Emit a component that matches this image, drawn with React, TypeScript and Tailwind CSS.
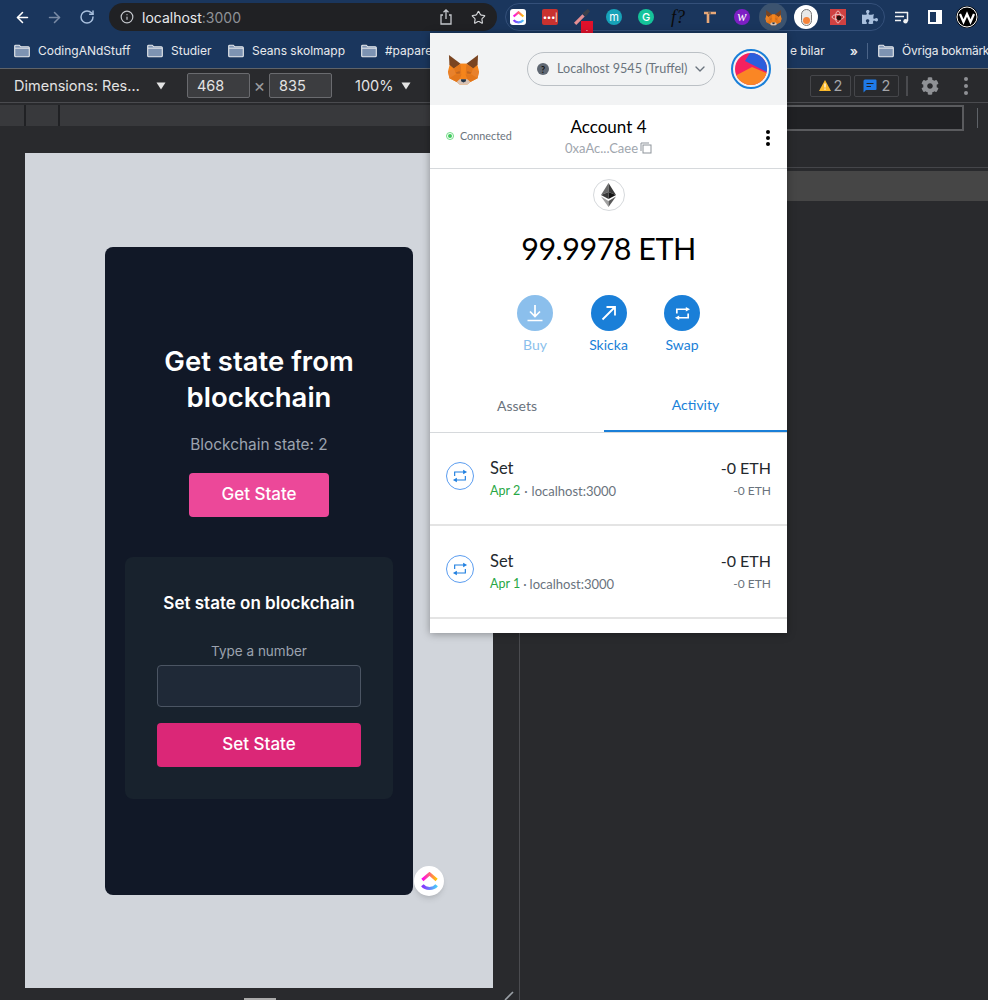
import React from "react";
import { ArrowLeft, ArrowRight, RotateCw, Info, Star, ChevronDown } from "lucide-react";
import { FaCog, FaPuzzlePiece } from "react-icons/fa";

const sans = "font-['Inter',sans-serif]";
const mm = "font-['Lato',sans-serif]";

function Folder() {
  return (
    <svg width="16" height="14" viewBox="0 0 16 14" className="shrink-0">
      <path d="M0.7 2.2a1 1 0 0 1 1-1h3.6l1.5 1.6h7.5a1 1 0 0 1 1 1v8a1 1 0 0 1-1 1H1.7a1 1 0 0 1-1-1z" fill="#7d93b2" stroke="#e8eaed" strokeWidth="1.1" />
      <path d="M1 4.2h14" stroke="#e8eaed" strokeWidth="1" />
    </svg>
  );
}

function Fox({ size = 34 }: { size?: number }) {
  return (
    <svg width={size} height={size} viewBox="0 0 34 32">
      <polygon points="3,10 7,14 14,10 20,10 27,14 31,10 33,18 31.5,25 24,29 21,31.5 13,31.5 10,29 2.5,25 1,18" fill="#f6851b" />
      <polygon points="2,1 14,10 7,15 2.5,11" fill="#7a4420" />
      <polygon points="32,1 20,10 27,15 31.5,11" fill="#7a4420" />
      <polygon points="7,15 14,10 15,20 9,21" fill="#e2761b" />
      <polygon points="27,15 20,10 19,20 25,21" fill="#e2761b" />
      <polygon points="14,10 20,10 19,21 17,23 15,21" fill="#f6851b" />
      <polygon points="1,18 7,15 9,21 2.5,25" fill="#e8812c" />
      <polygon points="33,18 27,15 25,21 31.5,25" fill="#e8812c" />
      <polygon points="9,21 15,21 13,26 10,29 2.5,25" fill="#e2761b" />
      <polygon points="25,21 19,21 21,26 24,29 31.5,25" fill="#e2761b" />
      <polygon points="9,19 13,17.5 13.5,20 10,20.5" fill="#c0651f" />
      <polygon points="25,19 21,17.5 20.5,20 24,20.5" fill="#c0651f" />
      <polygon points="13,26 21,26 24,29 21,31.5 13,31.5 10,29" fill="#d7c1b3" />
      <polygon points="14.5,26 19.5,26 19.5,28 17,29.5 14.5,28" fill="#233447" />
    </svg>
  );
}

function ClickUp({ size = 20, id }: { size?: number; id: string }) {
  return (
    <svg width={size} height={size} viewBox="0 0 20 20">
      <defs>
        <linearGradient id={`${id}Top`} x1="0" y1="0" x2="1" y2="0">
          <stop offset="0" stopColor="#ff02f0" />
          <stop offset="1" stopColor="#ffc800" />
        </linearGradient>
        <linearGradient id={`${id}Bot`} x1="0" y1="0" x2="1" y2="0">
          <stop offset="0" stopColor="#8930fd" />
          <stop offset="1" stopColor="#49ccf9" />
        </linearGradient>
      </defs>
      <polyline points="2.5,8.5 10,2 17.5,8.5" fill="none" stroke={`url(#${id}Top)`} strokeWidth="3.4" />
      <path d="M2.5 14 C 6 18.5, 14 18.5, 17.5 14" fill="none" stroke={`url(#${id}Bot)`} strokeWidth="3.4" />
    </svg>
  );
}

function SwapIcon({ size = 16, color = "white", sw = 1.8 }: { size?: number; color?: string; sw?: number }) {
  return (
    <svg width={size} height={size} viewBox="0 0 18 18" fill="none">
      <path d="M3 9V4.5H13" stroke={color} strokeWidth={sw} />
      <polygon points="12.5,2 17,4.5 12.5,7" fill={color} />
      <path d="M15 9V13.5H5" stroke={color} strokeWidth={sw} />
      <polygon points="5.5,11 1,13.5 5.5,16" fill={color} />
    </svg>
  );
}

function Tri({ className = "" }: { className?: string }) {
  return (
    <svg width="10" height="8" viewBox="0 0 10 8" className={className}>
      <polygon points="0.5,0.5 9.5,0.5 5,7.5" fill="#e3e3e3" />
    </svg>
  );
}

function Ext({ children }: { children: React.ReactNode }) {
  return <div className="relative flex h-7 w-8 shrink-0 items-center justify-center">{children}</div>;
}

function Tx({ date, gap }: { date: string; gap: string }) {
  return (
    <div className="flex h-[93px] shrink-0 items-start border-b-2 border-[#e4e4e4] px-4 pt-[25px]">
      <div className="mt-[4px] flex h-7 w-7 shrink-0 items-center justify-center rounded-full border border-[#5b9df0]">
        <SwapIcon size={16} color="#1f7fe0" sw={1.3} />
      </div>
      <div className="ml-4 flex-1">
        <div className="text-[16.5px] leading-5 text-[#24292e]">Set</div>
        <div className="mt-[5px] flex text-[13px] leading-4 text-[#6a737d]">
          <span className="text-[12.5px] text-[#28a745]">{date}</span>
          <span className={gap}>·</span>
          <span>localhost:3000</span>
        </div>
      </div>
      <div className="text-right">
        <div className="text-[16px] leading-5 text-[#24292e]">-0 ETH</div>
        <div className="mt-[5px] text-[12px] leading-4 text-[#6a737d]">-0 ETH</div>
      </div>
    </div>
  );
}

function Action({ label, light, children }: { label: string; light?: boolean; children: React.ReactNode }) {
  return (
    <div className="flex w-[73.5px] flex-col items-center">
      <div className={`flex h-9 w-9 items-center justify-center rounded-full ${light ? "bg-[#8bbfec]" : "bg-[#1a7fd8]"}`}>{children}</div>
      <div className={`mt-[4px] text-[14px] leading-5 ${light ? "text-[#8bbfec]" : "text-[#1a7fd8]"}`}>{label}</div>
    </div>
  );
}

export default function App() {
  return (
    <div className={`relative flex h-[1000px] w-[988px] flex-col overflow-hidden bg-[#292a2d] ${sans}`}>
      {/* Browser toolbar */}
      <div className="flex h-[34px] shrink-0 items-center bg-[#1a365d] pl-[14px]">
        <ArrowLeft size={17} strokeWidth={2.2} className="text-white" />
        <ArrowRight size={17} strokeWidth={2.2} className="ml-[15px] text-[#7a8ba5]" />
        <RotateCw size={16} strokeWidth={2.2} className="ml-[16px] text-[#a9c0de]" />
        <div className="ml-[14px] flex h-[28px] w-[388px] shrink-0 items-center rounded-full bg-[#202124] pl-[11px]">
          <Info size={14} className="text-[#c4c7cc]" />
          <span className="ml-[8px] text-[14px] text-[#e8eaed]">localhost<span className="text-[#8f9297]">:3000</span></span>
          <svg width="14" height="16" viewBox="0 0 14 16" fill="none" className="ml-auto text-[#c4c7cc]">
            <path d="M4 6H2v9h10V6h-2M7 10V1M4.5 3.2 7 .9l2.5 2.3" stroke="currentColor" strokeWidth="1.3" />
          </svg>
          <Star size={15} strokeWidth={1.8} className="ml-[18px] mr-[11px] text-[#d5d7da]" />
        </div>
        <div className="ml-[8px] flex h-[28px] w-[380px] shrink-0 items-center rounded-full border border-[#34507a]">
          <div className="-ml-[4px] flex">
            <Ext>
              <div className="flex h-4 w-4 items-center justify-center rounded-[3px] bg-white"><ClickUp size={13} id="cuA" /></div>
            </Ext>
            <Ext><div className="flex h-4 w-4 items-center justify-center rounded-[2px] bg-[#c8322f] text-[8px] leading-none tracking-tighter text-white">•••|</div></Ext>
            <Ext>
              <svg width="18" height="18" viewBox="0 0 17 17"><path d="M2 15 10 7" stroke="#e58f93" strokeWidth="3" /><path d="M9 5 14 1l2 2-4 5z" fill="#3b4049" /></svg>
              <div className="absolute bottom-[-2px] left-[15px] flex h-3 w-3 items-end justify-center bg-[#e0112b] text-[7px] leading-[9px] text-white">.</div>
            </Ext>
            <Ext><div className="flex h-4 w-4 items-center justify-center rounded-full bg-[#17a2b8] text-[11px] leading-none text-white">m</div></Ext>
            <Ext><div className="flex h-4 w-4 items-center justify-center rounded-full bg-[#15c39a] text-[11px] font-medium leading-none text-white">G</div></Ext>
            <Ext><span className="font-['Liberation_Serif',serif] text-[18px] italic leading-none text-[#0a0a0a]">f?</span></Ext>
            <Ext>
              <svg width="14" height="14" viewBox="0 0 14 14"><path d="M1 3h12M5 3v10" stroke="#e8a878" strokeWidth="2.6" fill="none" /><path d="M5 3h3" stroke="#333" strokeWidth="1" /></svg>
            </Ext>
            <Ext><div className="flex h-4 w-4 items-center justify-center rounded-full bg-[#7d1fc4] font-['Liberation_Serif',serif] text-[14px] italic leading-none text-white">w</div></Ext>
            <Ext>
              <div className="absolute left-[1px] top-0 h-7 w-7 rounded-full bg-[#3c536f]" />
              <div className="relative -ml-[1px]"><Fox size={17} /></div>
            </Ext>
            <Ext>
              <div className="flex h-6 w-6 items-center justify-center rounded-full bg-white">
                <div className="flex h-[17px] w-[11px] items-end justify-center rounded-full border border-[#777] bg-[#e8e8e8] pb-[1px]">
                  <div className="h-[7px] w-[7px] rounded-full bg-[#f5843b]" />
                </div>
              </div>
            </Ext>
            <Ext>
              <div className="flex h-4 w-4 items-center justify-center bg-[#cf4141]">
                <svg width="14" height="14" viewBox="0 0 14 14" fill="none"><ellipse cx="7" cy="7" rx="6" ry="2.5" stroke="#f4d6d6" strokeWidth=".8" /><ellipse cx="7" cy="7" rx="2.5" ry="6" stroke="#f4d6d6" strokeWidth=".8" /><circle cx="8" cy="8" r="2.4" fill="#26120f" /></svg>
              </div>
            </Ext>
            <Ext><FaPuzzlePiece size={16} className="text-[#a8bfdd]" /></Ext>
          </div>
        </div>
        <div className="ml-[2px] flex">
          <Ext>
            <svg width="16" height="13" viewBox="0 0 16 13" fill="none"><path d="M0 1.5h13M0 5.5h9M0 9.5h6" stroke="#f1f3f4" strokeWidth="1.5" /><path d="M12.5 1v9" stroke="#f1f3f4" strokeWidth="1.5" /><circle cx="10.5" cy="10.2" r="2.2" fill="#f1f3f4" /></svg>
          </Ext>
          <Ext><div className="h-[14px] w-[14px] border-2 border-r-[6px] border-white" /></Ext>
          <Ext>
            <div className="flex h-[22px] w-[22px] items-center justify-center rounded-full bg-black">
              <svg width="22" height="22" viewBox="0 0 22 22" fill="none"><circle cx="11" cy="11" r="10" stroke="white" strokeWidth="1" /><path d="M4 8l3.5 8L11 8l3.5 8L18 8" stroke="white" strokeWidth="2.2" /></svg>
            </div>
          </Ext>
        </div>
      </div>

      {/* Bookmarks */}
      <div className="flex h-[35px] shrink-0 items-center border-b border-[#5f6368] bg-[#1a365d] pl-[14px] text-[12px] text-[#e8eaed]">
        <Folder /><span className="ml-2 w-[93px] whitespace-nowrap">CodingANdStuff</span>
        <span className="ml-[16px]"><Folder /></span><span className="ml-2 w-[41px]">Studier</span>
        <span className="ml-[16px]"><Folder /></span><span className="ml-2 w-[93px] whitespace-nowrap">Seans skolmapp</span>
        <span className="ml-[16px]"><Folder /></span><span className="ml-2 w-[60px] whitespace-nowrap">#papare</span>
        <span className="ml-auto whitespace-nowrap">e bilar</span>
        <span className="ml-[25px] text-[13px] font-semibold leading-none">»</span>
        <div className="ml-[9px] h-[16px] w-px bg-[#4b6488]" />
        <span className="ml-[10px]"><Folder /></span>
        <span className="ml-2 w-[86px] whitespace-nowrap tracking-[-0.25px]">Övriga bokmärk</span>
      </div>

      {/* Device toolbar */}
      <div className="flex h-[34px] shrink-0 items-center border-b border-[#4a4b4f] bg-[#292a2d] pl-[14px] text-[14.5px] text-[#e3e3e3]">
        <span className="w-[127px] whitespace-nowrap">Dimensions: Res…</span>
        <Tri className="ml-[15px]" />
        <div className="ml-[21px] flex h-[25px] w-[63px] items-center rounded-[2px] border border-[#6a6b6f] bg-[#3c3d40] pl-[9px]">468</div>
        <span className="w-[19px] text-center text-[18px] leading-none text-[#9a9b9f]">×</span>
        <div className="flex h-[25px] w-[63px] items-center rounded-[2px] border border-[#6a6b6f] bg-[#3c3d40] pl-[9px]">835</div>
        <span className="ml-[23px] w-[39px]">100%</span>
        <Tri className="ml-[7px]" />
        <div className="ml-auto flex h-[22px] w-[41px] items-center justify-center gap-[3px] rounded-[2px] border border-[#45464a] text-[#a4a6aa]">
          <svg width="12" height="11" viewBox="0 0 12 11"><polygon points="6,0 12,11 0,11" fill="#f9b82b" /><path d="M6 3.5V7.5M6 8.5V9.8" stroke="#fff" strokeWidth="1.2" /></svg>
          <span>2</span>
        </div>
        <div className="ml-[3px] flex h-[22px] w-[45px] items-center justify-center gap-[5px] rounded-[2px] border border-[#45464a] text-[#a4a6aa]">
          <svg width="14" height="14" viewBox="0 0 14 14"><path d="M2 0.5h10.5a1 1 0 0 1 1 1V10a1 1 0 0 1-1 1H3L.5 13.5V2a1.5 1.5 0 0 1 1.5-1.5z" fill="#1f7ae8" /><path d="M3.5 4.5h7M3.5 7.5h4.5" stroke="#202124" strokeWidth="1.2" /></svg>
          <span>2</span>
        </div>
        <div className="ml-[7px] h-[20px] w-[2px] bg-[#4a4b4f]" />
        <FaCog size={18} className="ml-[13px] text-[#8f9195]" />
        <div className="ml-[25px] mr-[20px] flex w-[4px] flex-col gap-[3px]">
          <div className="h-[4px] w-[4px] rounded-full bg-[#8f9195]" />
          <div className="h-[4px] w-[4px] rounded-full bg-[#8f9195]" />
          <div className="h-[4px] w-[4px] rounded-full bg-[#8f9195]" />
        </div>
      </div>

      {/* Main */}
      <div className="flex min-h-0 flex-1">
        <div className="flex w-[519px] shrink-0 flex-col">
          <div className="mt-[2px] flex h-[21px] w-full shrink-0 gap-[24px] bg-[#38393c] pl-[2px]">
            <div className="ml-[22px] h-full w-[2px] bg-[#202124]" />
            <div className="ml-[8px] h-full w-[2px] bg-[#202124]" />
          </div>
          <div className="ml-[25px] mt-[27px] flex h-[835px] w-[468px] shrink-0 items-center justify-center bg-[#d1d5db]">
            <div className="flex h-[648px] w-[308px] flex-col items-center rounded-lg bg-[#111827] pt-[96px]">
              <h1 className="w-[240px] text-center text-[27.5px] font-semibold leading-9 text-white">Get state from blockchain</h1>
              <p className="mt-[18px] text-[15.4px] leading-6 text-[#9ca3af]">Blockchain state: 2</p>
              <button className="mt-[16px] h-11 w-[140px] rounded bg-[#ec4899] pt-[1px] text-[17px] font-medium text-white">Get State</button>
              <div className="mt-[40px] flex h-[242px] w-[268px] flex-col items-center rounded-lg bg-[#18222d] px-8 pt-[34px]">
                <h2 className="text-[17px] font-semibold leading-6 text-white">Set state on blockchain</h2>
                <label className="mt-[26px] text-[13.5px] leading-5 text-[#9ca3af]">Type a number</label>
                <input className="mt-[4px] h-[42px] w-full rounded border border-[#4b5563] bg-[#1f2937]" />
                <button className="mt-4 h-11 w-full rounded bg-[#db2777] pt-[1px] text-[17px] font-medium text-white">Set State</button>
              </div>
            </div>
          </div>
          <div className="ml-[244px] mt-[10px] h-[2px] w-8 bg-[#aaaaaa]" />
        </div>
        <div className="w-px shrink-0 bg-[#4a4b4f]" />
        <div className="flex min-w-0 flex-1 flex-col">
          <div className="flex h-[65px] shrink-0 items-start border-b border-[#45464a] pt-[2px]">
            <div className="h-[26px] flex-1 border-2 border-[#5a5b5e] bg-[#202124]" />
            <div className="ml-[13px] mr-[10px] mt-[3px] h-[20px] w-px bg-[#5f6368]" />
          </div>
          <div className="mt-[3px] h-[30px] shrink-0 bg-[#464646]" />
        </div>
      </div>

      {/* Resize corner */}
      <svg width="12" height="10" viewBox="0 0 12 10" className="absolute bottom-0 left-[503px]">
        <path d="M2 10 10 2" stroke="#9aa0a6" strokeWidth="1.6" />
      </svg>

      {/* ClickUp bubble */}
      <div className="absolute left-[414px] top-[866px] flex h-[30px] w-[30px] items-center justify-center rounded-full bg-white shadow-md">
        <ClickUp size={19} id="cuB" />
      </div>

      {/* MetaMask popup */}
      <div className={`absolute left-[430px] top-[33px] flex h-[600px] w-[357px] flex-col overflow-hidden bg-white shadow-[0_1px_8px_rgba(0,0,0,0.35)] ${mm}`}>
        <div className="flex h-[72px] shrink-0 items-center bg-[#f2f3f4] pl-[17px]">
          <Fox size={33} />
          <div className="ml-[47px] flex h-[34px] w-[188px] items-center rounded-full border border-[#bbc0c5] pl-[9px] text-[12.6px] text-[#6a737d]">
            <div className="flex h-3 w-3 items-center justify-center rounded-full bg-[#5f6772] text-[9px] font-bold leading-none text-[#111]">?</div>
            <span className="ml-[8px] whitespace-nowrap">Localhost 9545 (Truffel)</span>
            <ChevronDown size={16} className="ml-auto mr-[6px] text-[#6a737d]" />
          </div>
          <div className="ml-[16px] flex h-10 w-10 items-center justify-center rounded-full border-2 border-[#1a7fd8]">
            <svg width="32" height="32" viewBox="0 0 32 32" className="rounded-full">
              <rect width="32" height="32" fill="#f5215f" />
              <polygon points="15,0 34,0 34,20 10,8" fill="#2b5fdc" />
              <polygon points="-2,24 17,14 36,22 36,34 -2,34" fill="#fa8624" />
            </svg>
          </div>
        </div>

        <div className="relative flex h-[64px] shrink-0 flex-col items-center border-b border-[#d6d9dc] pt-[12px]">
          <div className="text-[17px] leading-5 text-black">Account 4</div>
          <div className="mt-[3px] flex items-center text-[13px] leading-4 text-[#9fa6ae]">
            0xaAc...Caee
            <svg width="12" height="12" viewBox="0 0 12 12" fill="none" className="ml-[2px]"><path d="M1 9V1h8" stroke="#8d939a" /><rect x="3" y="3" width="8" height="8" stroke="#8d939a" /></svg>
          </div>
          <div className="absolute left-[16px] top-[25px] flex items-center text-[10.8px] leading-3 text-[#6a737d]">
            <div className="flex h-2 w-2 items-center justify-center rounded-full border border-[#70dd85]"><div className="h-1 w-1 rounded-full bg-[#40c95e]" /></div>
            <span className="ml-[6px]">Connected</span>
          </div>
          <div className="absolute right-[17px] top-[25px] flex flex-col gap-[2px]">
            <div className="h-[4px] w-[4px] rounded-full bg-black" />
            <div className="h-[4px] w-[4px] rounded-full bg-black" />
            <div className="h-[4px] w-[4px] rounded-full bg-black" />
          </div>
        </div>

        <div className="mt-[10px] flex h-8 w-8 shrink-0 items-center justify-center self-center rounded-full border border-[#d6d9dc]">
          <svg width="15" height="24" viewBox="0 0 15 24">
            <polygon points="7.5,0 0,12 7.5,9" fill="#6b6b6b" />
            <polygon points="7.5,0 15,12 7.5,9" fill="#393939" />
            <polygon points="0,12 7.5,9 7.5,16" fill="#3a3a3a" />
            <polygon points="15,12 7.5,9 7.5,16" fill="#141414" />
            <polygon points="0,13.5 7.5,18 7.5,24" fill="#a0a0a0" />
            <polygon points="15,13.5 7.5,18 7.5,24" fill="#5a5a5a" />
          </svg>
        </div>
        <div className="mt-[17px] shrink-0 text-center text-[30.5px] leading-10 tracking-[-0.5px] text-black">99.9978 ETH</div>
        <div className="mt-[27px] flex shrink-0 justify-center">
          <Action label="Buy" light>
            <svg width="20" height="20" viewBox="0 0 20 20" fill="none"><path d="M10 2v11M5 8.5l5 5 5-5M2.5 17.5h15" stroke="white" strokeWidth="1.7" /></svg>
          </Action>
          <Action label="Skicka">
            <svg width="18" height="18" viewBox="0 0 18 18" fill="none"><path d="M2.5 15.5 15 3M6.5 3H15v8.5" stroke="white" strokeWidth="1.8" /></svg>
          </Action>
          <Action label="Swap">
            <SwapIcon size={17} />
          </Action>
        </div>
        <div className="mt-[23px] flex h-[55px] shrink-0 border-b border-[#d6d9dc] text-[14px]">
          <div className="flex h-[54px] flex-1 items-center justify-center text-[#6a737d]">Assets</div>
          <div className="flex h-[54px] w-[183px] items-center justify-center border-b-2 border-[#1a7fd8] text-[#1a7fd8]">Activity</div>
        </div>
        <Tx date="Apr 2" gap="mx-[4px]" />
        <Tx date="Apr 1" gap="mx-[3px]" />
      </div>
    </div>
  );
}
